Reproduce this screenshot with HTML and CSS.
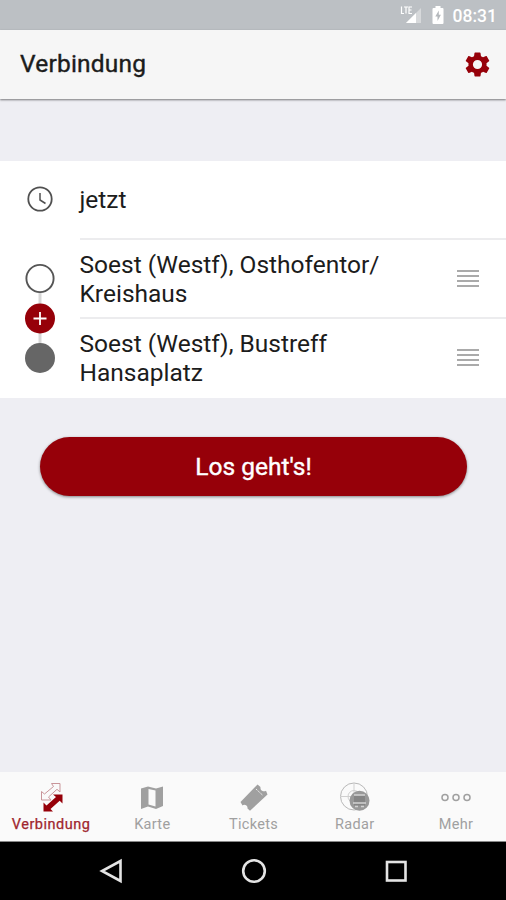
FILE: index.html
```html
<!DOCTYPE html>
<html lang="de">
<head>
<meta charset="utf-8">
<title>Verbindung</title>
<link rel="stylesheet" href="styles.css">
</head>
<body>
<div class="screen">
  <div class="status">
    <svg class="signal" width="22" height="20" viewBox="0 0 22 20">
      <path d="M21 3V18H6Z" fill="#fff" opacity=".4"/>
      <path d="M16 8V18H6Z" fill="#fff"/>
      <path d="M1.500 1.500V8.500H4M4 2H8M6 2V8.500M12 2H9V8.500H12M9 5H11.500" fill="none" stroke="#fff" stroke-width="1.200"/>
    </svg>
    <svg class="battery" width="12" height="18" viewBox="0 0 12 18">
      <path d="M3.500 0H8.500V2H10.500Q11.500 2 11.500 3V17Q11.500 18 10.500 18H1.500Q.5 18 .5 17V3Q.5 2 1.500 2H3.500Z" fill="#fff"/>
      <path d="M6.800 4.500L3.300 10.500H5.500V15L8.900 8.800H6.800Z" fill="#b4b8bc"/>
    </svg>
    <span class="time">08:31</span>
  </div>
  <header class="header">
    <h1>Verbindung</h1>
    <svg width="29" height="29" viewBox="0 0 24 24" fill="#960009"><path d="M19.430 12.980c.04-.32.070-.64.070-.98s-.03-.66-.07-.98l2.110-1.650c.19-.15.24-.42.120-.64l-2-3.460c-.12-.22-.39-.3-.61-.22l-2.490 1c-.52-.4-1.080-.73-1.690-.98l-.38-2.650C14.460 2.180 14.250 2 14 2h-4c-.25 0-.46.18-.49.42l-.38 2.650c-.61.25-1.170.59-1.690.98l-2.490-1c-.23-.09-.49 0-.61.220l-2 3.460c-.13.22-.07.49.12.64l2.110 1.650c-.04.32-.07.65-.07.980s.03.66.07.98l-2.110 1.650c-.19.15-.24.42-.12.640l2 3.460c.12.22.39.3.61.220l2.490-1c.52.4 1.080.73 1.690.98l.38 2.650c.03.24.24.42.49.42h4c.25 0 .46-.18.49-.42l.38-2.650c.61-.25 1.170-.59 1.690-.98l2.490 1c.23.09.49 0 .61-.220l2-3.460c.12-.22.07-.49-.12-.64l-2.110-1.650zM12 15.800a3.800 3.800 0 1 1 0-7.600 3.800 3.800 0 0 1 0 7.600z"/></svg>
  </header>
  <main class="content">
    <section class="form">
      <div class="rail">
        <svg width="30" height="220" viewBox="0 0 30 220" fill="none">
          <circle cx="15" cy="27" r="11.700" stroke="#505050" stroke-width="1.800"/>
          <path d="M15 21V28L20.500 31.500" stroke="#505050" stroke-width="1.500"/>
          <path d="M15 120V175" stroke="#d8d8d8" stroke-width="3"/>
          <circle cx="15" cy="106.500" r="13.600" fill="#fff" stroke="#555" stroke-width="1.900"/>
          <circle cx="15" cy="146.500" r="15" fill="#960009"/>
          <path d="M8.500 146.500H21.500M15 140V153" stroke="#fff" stroke-width="1.800"/>
          <circle cx="15" cy="186" r="15" fill="#666"/>
        </svg>
      </div>
      <div class="rows">
        <div class="row"><span>jetzt</span></div>
        <div class="row"><span>Soest (Westf), Osthofentor/<br>Kreishaus</span><i class="handle"></i></div>
        <div class="row"><span>Soest (Westf), Bustreff<br>Hansaplatz</span><i class="handle"></i></div>
      </div>
    </section>
    <button class="go">Los geht's!</button>
  </main>
  <nav class="tabs">
    <a class="tab active">
      <svg width="32" height="32" viewBox="0 0 32 32">
        <path d="M16.500 1.500H25V10L22 7.300L13.500 15L16 18H6.500V9.500L9.500 12L18.500 4.500Z" fill="none" stroke="#c9959a" stroke-width="1"/>
        <path d="M18 12.500H27.500V21.500L24.700 18.700L15.500 27L18 29.500H8.500V20.500L11.500 23.500L21 15Z" fill="#960009"/>
      </svg><span>Verbindung</span></a>
    <a class="tab">
      <svg width="32" height="32" viewBox="0 0 32 32">
        <path d="M5 6.500L12 4.500L20 6.500L27 4.500V24L20 27L12 24.500L5 27Z" fill="#a0a0a0"/>
        <path d="M12.500 7L19.500 8.500V24.500L12.500 22.500Z" fill="#fafafa"/>
      </svg><span>Karte</span></a>
    <a class="tab">
      <svg width="32" height="32" viewBox="0 0 32 32">
        <path d="M19.500 2.500L22.500 5Q22 8.500 24.500 9Q26.500 9.800 28 8.800L29.500 12.500L12 28.800L9.500 26.500Q9.800 23.500 7.500 23Q5.500 22.500 4.500 23.500L2.500 20Z" fill="#a0a0a0"/>
        <path d="M18 7L25 13.500" stroke="#eee" stroke-width="1" stroke-dasharray="2 1"/>
      </svg><span>Tickets</span></a>
    <a class="tab">
      <svg width="32" height="32" viewBox="0 0 32 32" fill="none">
        <circle cx="15" cy="14.500" r="13.500" stroke="#b8b8b8"/>
        <circle cx="15" cy="14.500" r="6" stroke="#d0d0d0"/>
        <path d="M15 1V28M1 14.500H29" stroke="#d0d0d0"/>
        <circle cx="20.500" cy="18.800" r="10" fill="#999"/>
        <path d="M15 13.500H26V23.500H15Z" fill="#858585"/>
        <path d="M15 13H26M14 21H27M16 24.500H19M22 24.500H25" stroke="#d2d2d2" stroke-width="1.300"/>
      </svg><span>Radar</span></a>
    <a class="tab">
      <svg width="32" height="32" viewBox="0 0 32 32" fill="none" stroke="#a0a0a0" stroke-width="1.500">
        <circle cx="5" cy="15.500" r="3"/><circle cx="16" cy="15.500" r="3"/><circle cx="27" cy="15.500" r="3"/>
      </svg><span>Mehr</span></a>
  </nav>
  <div class="navbar">
    <svg width="26" height="26" viewBox="0 0 26 26"><path d="M21.500 3V23L3 13Z"/></svg>
    <svg width="26" height="26" viewBox="0 0 26 26"><circle cx="13" cy="13" r="10.800"/></svg>
    <svg width="26" height="26" viewBox="0 0 26 26"><rect x="4" y="4" width="18.500" height="18.500"/></svg>
  </div>
</div>
</body>
</html>
```
FILE: styles.css
```css
* { box-sizing: border-box; }
body { margin: 0; font-family: Roboto, sans-serif; color: #1c1c1c; }
.screen { width: 506px; height: 900px; display: flex; flex-direction: column; background: #eeeef3; overflow: hidden; }
.status { height: 30px; flex: none; background: #bcc0c4; display: flex; align-items: center; padding-right: 9px; justify-content: flex-end; color: #fff; }
.signal { margin-right: 10px; }
.battery { margin-right: 9px; }
.time { font-size: 17.500px; font-weight: 500; line-height: 30px; padding-top: 2px; }
.header { height: 69px; flex: none; background: #f6f6f6; display: flex; align-items: center; justify-content: space-between; padding: 0 14px 1px 20px; box-shadow: 0 1px 2px rgba(0, 0, 0, .5); }
h1 { margin: 0; font-size: 24.500px; font-weight: 400; line-height: 30px; letter-spacing: .2px; -webkit-text-stroke: .4px; }
.content { flex: 1; padding-top: 62px; }
.form { display: flex; height: 237px; background: #fff; }
.rail { width: 80px; flex: none; padding: 11px 0 0 25px; }
.rows { flex: 1; }
.row { height: 79px; display: flex; align-items: center; justify-content: space-between; padding-right: 27px; font-size: 24.500px; line-height: 29px; }
.row:not(:last-child) { border-bottom: 2px solid #ececee; }
.row:last-child { padding-bottom: 2px; }
.row span { margin-left: -.5px; }
.handle { width: 22px; height: 17px; background: repeating-linear-gradient(#aaa 0 2px, #fff 2px 5px); }
.go { display: block; margin: 39px 39px 0 40px; width: 427px; height: 59px; border: 0; border-radius: 30px; background: #960009; color: #fff; font: 400 24.500px/59px Roboto, sans-serif; -webkit-text-stroke: .4px; padding: 0; box-shadow: 0 1px 3px rgba(0, 0, 0, .45); }
.tabs { height: 70px; flex: none; display: flex; background: #fafafa; border-bottom: 1px solid #888; }
.tab { flex: 1; display: flex; flex-direction: column; align-items: center; padding: 10px 0 0 1px; font-size: 14.500px; letter-spacing: .3px; line-height: 18px; color: #a0a0a0; }
.tab span { margin-top: 2px; }
.active { color: #a0272f; letter-spacing: .5px; -webkit-text-stroke: .25px; }
.navbar { height: 58px; flex: none; background: #000; display: flex; justify-content: center; align-items: center; gap: 116px; padding-left: 2px; }
.navbar svg { fill: none; stroke: #e4e4e4; stroke-width: 2.600; }
```
